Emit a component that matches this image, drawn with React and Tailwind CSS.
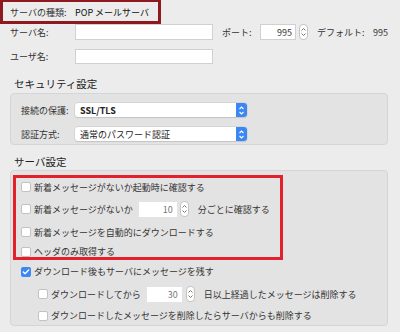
import { Check } from "lucide-react";

function Stepper({ className = "" }) {
  return (
    <div
      className={`w-[9px] h-[16px] rounded-[4px] bg-white border border-[#c4c4c4] flex items-center justify-center shrink-0 ${className}`}
    >
      <svg width="7" height="12" viewBox="0 0 7 12" fill="none" stroke="#7a7a7a" strokeWidth="1">
        <path d="M1.5 4.5 L3.5 2.5 L5.5 4.5" />
        <path d="M1.5 7.5 L3.5 9.5 L5.5 7.5" />
      </svg>
    </div>
  );
}

function Popup({ value, bold }) {
  return (
    <div className="w-[172px] h-[14px] flex rounded-[3px] bg-white shadow-[0_0_0_0.5px_#c8c8c8,0_1px_1px_rgba(0,0,0,0.15)] overflow-hidden">
      <div className={`flex-1 pl-[5px] flex items-center text-[#222] ${bold ? "font-semibold" : ""}`}>{value}</div>
      <div className="w-[11px] bg-[#3b87f3] flex items-center justify-center">
        <svg width="7" height="11" viewBox="0 0 7 11" fill="none" stroke="white" strokeWidth="1.1">
          <path d="M1.5 4 L3.5 2 L5.5 4" />
          <path d="M1.5 7 L3.5 9 L5.5 7" />
        </svg>
      </div>
    </div>
  );
}

function Box({ checked }) {
  return checked ? (
    <div className="w-[10px] h-[10px] rounded-[2px] bg-[#3b87f3] flex items-center justify-center shrink-0">
      <Check size={8} strokeWidth={4} color="white" />
    </div>
  ) : (
    <div className="w-[10px] h-[10px] rounded-[2px] bg-white border border-[#c2c2c2] shrink-0" />
  );
}

function Row({ h, indent, checked, children }) {
  return (
    <div className={`flex items-center ${h} ${indent ? "pl-[27px]" : "pl-[10px]"}`}>
      <Box checked={checked} />
      <div className="ml-[3px] flex items-center">{children}</div>
    </div>
  );
}

function NumField({ value, w }) {
  return (
    <div className={`${w} h-[15px] bg-white flex items-center justify-end pr-[4px] text-[#777]`}>{value}</div>
  );
}

export default function App() {
  return (
    <div className="relative w-[400px] h-[332px] overflow-hidden bg-[#ececec] text-[9px] leading-none text-[#333] font-['Noto_Sans_CJK_JP','Noto_Sans',sans-serif]">
      {/* server type */}
      <div className="h-[24px] flex items-center">
        <div className="w-[75px] pl-[10px]">サーバの種類:</div>
        <div className="text-[#111]">POP メールサーバ</div>
      </div>

      <div className="h-[16px] flex items-center">
        <div className="w-[75px] pl-[10px]">サーバ名:</div>
        <div className="w-[138px] h-[16px] bg-white border border-[#d0d0d0]" />
        <div className="w-[47px] pl-[9px]">ポート:</div>
        <div className="w-[36px] h-[16px] bg-white border border-[#d0d0d0] flex items-center justify-end pr-[3px] text-[#333]">995</div>
        <Stepper className="ml-[3px]" />
        <div className="ml-[9px] w-[56px]">デフォルト:</div>
        <div>995</div>
      </div>

      <div className="mt-[9px] h-[15px] flex items-center">
        <div className="w-[75px] pl-[10px]">ユーザ名:</div>
        <div className="w-[138px] h-[15px] bg-white border border-[#d0d0d0]" />
      </div>

      <div className="mt-[12px] h-[17px] pl-[14px] flex items-center text-[10.5px] text-[#222]">セキュリティ設定</div>

      <div className="ml-[10px] mr-[12px] h-[52px] rounded-[4px] border border-[#d5d5d5] bg-[#e3e3e3] pt-[9px] pl-[10px] flex flex-col gap-[10px]">
        <div className="flex items-center">
          <div className="w-[54px]">接続の保護:</div>
          <Popup value="SSL/TLS" bold />
        </div>
        <div className="flex items-center">
          <div className="w-[54px]">認証方式:</div>
          <Popup value="通常のパスワード認証" />
        </div>
      </div>

      <div className="mt-[9px] h-[16px] pl-[14px] flex items-center text-[10.5px] text-[#222]">サーバ設定</div>

      <div className="ml-[10px] mr-[12px] h-[156px] rounded-[4px] border border-[#d5d5d5] bg-[#e3e3e3] pt-[6px]">
        <Row h="h-[20px]">新着メッセージがないか起動時に確認する</Row>
        <Row h="h-[24px]">
          <span>新着メッセージがないか</span>
          <NumField value="10" w="w-[38px] ml-[6px]" />
          <Stepper className="ml-[3px]" />
          <span className="ml-[9px]">分ごとに確認する</span>
        </Row>
        <Row h="h-[22px]">新着メッセージを自動的にダウンロードする</Row>
        <Row h="h-[17px]">ヘッダのみ取得する</Row>
        <Row h="h-[23px]" checked>ダウンロード後もサーバにメッセージを残す</Row>
        <Row h="h-[22px]" indent>
          <span>ダウンロードしてから</span>
          <NumField value="30" w="w-[35px] ml-[6px]" />
          <Stepper className="ml-[4px]" />
          <span className="ml-[9px]">日以上経過したメッセージは削除する</span>
        </Row>
        <Row h="h-[21px]" indent>ダウンロードしたメッセージを削除したらサーバからも削除する</Row>
      </div>

      {/* annotation boxes */}
      <div className="absolute left-0 top-0 w-[161px] h-[24px] border-x-[3px] border-b-[3px] border-t-[2px] border-[#8e1a20]" />
      <div className="absolute left-[13px] top-[175px] w-[270px] h-[85px] border-[3px] border-[#e3202c]" />
    </div>
  );
}
